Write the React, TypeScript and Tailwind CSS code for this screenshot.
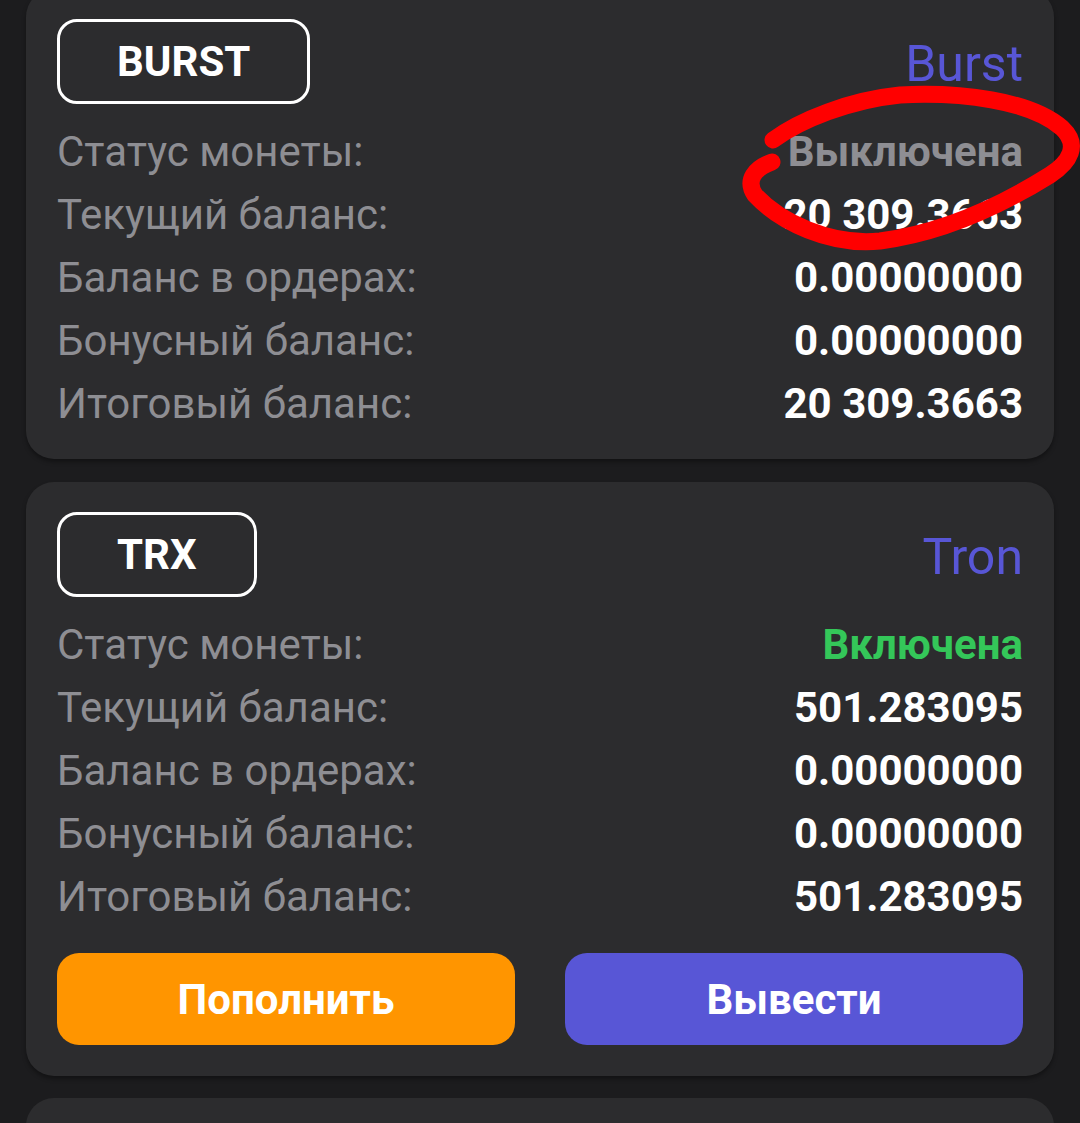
import React from 'react'

type Row = { label: string; value: string; tone?: 'on' | 'off' }

const coins = [
  {
    ticker: 'BURST',
    name: 'Burst',
    rows: [
      { label: 'Статус монеты:', value: 'Выключена', tone: 'off' },
      { label: 'Текущий баланс:', value: '20 309.3663' },
      { label: 'Баланс в ордерах:', value: '0.00000000' },
      { label: 'Бонусный баланс:', value: '0.00000000' },
      { label: 'Итоговый баланс:', value: '20 309.3663' },
    ] as Row[],
    actions: false,
  },
  {
    ticker: 'TRX',
    name: 'Tron',
    rows: [
      { label: 'Статус монеты:', value: 'Включена', tone: 'on' },
      { label: 'Текущий баланс:', value: '501.283095' },
      { label: 'Баланс в ордерах:', value: '0.00000000' },
      { label: 'Бонусный баланс:', value: '0.00000000' },
      { label: 'Итоговый баланс:', value: '501.283095' },
    ] as Row[],
    actions: true,
  },
]

const CoinCard = ({ coin, first }: { coin: (typeof coins)[number]; first?: boolean }) => {
  return (
    <div
      className={`bg-[#2c2c2e] rounded-[28px] px-[31px] pt-[30px] shadow-[0_3px_4px_rgba(0,0,0,0.35)] ${
        first ? 'mt-[-11px] pb-[24px]' : 'mt-[23px] pb-[31px]'
      }`}
    >
      {/* Header */}
      <div className="flex justify-between items-center">
        <div className="h-[85px] px-[57px] border-[3px] border-white rounded-[20px] flex items-center text-white font-bold text-[42px] leading-none">
          {coin.ticker}
        </div>
        <span className="text-[#5856d6] text-[50px] leading-none pt-[4px]">{coin.name}</span>
      </div>

      {/* Balances */}
      <div className="mt-[16px] flex flex-col">
        {coin.rows.map((row) => (
          <div key={row.label} className="h-[63px] flex items-center justify-between text-[42px] leading-none">
            <span className="text-[#8e8e93]">{row.label}</span>
            <span
              className={`font-bold ${
                row.tone === 'on' ? 'text-[#34c759]' : row.tone === 'off' ? 'text-[#8e8e93]' : 'text-white'
              }`}
            >
              {row.value}
            </span>
          </div>
        ))}
      </div>

      {/* Buttons */}
      {coin.actions && (
        <div className="mt-[25px] grid grid-cols-2 gap-[50px]">
          <button className="h-[92px] rounded-[22px] bg-[#ff9500] text-white font-bold text-[42px]">Пополнить</button>
          <button className="h-[92px] rounded-[22px] bg-[#5856d6] text-white font-bold text-[42px]">Вывести</button>
        </div>
      )}
    </div>
  )
}

export default function App() {
  return (
    <section
      className="relative w-full h-[1123px] overflow-hidden bg-[#1c1c1e] px-[26px]"
      style={{ fontFamily: 'Roboto, "Noto Sans", sans-serif' }}
    >
      <CoinCard coin={coins[0]} first />
      <CoinCard coin={coins[1]} />
      <div className="mt-[22px] h-[200px] bg-[#2c2c2e] rounded-[28px]" />

      {/* hand-drawn mark */}
      <svg className="absolute inset-0 pointer-events-none" width="1080" height="1123" viewBox="0 0 1080 1123">
        <path
          d="M773 140 C 800 120, 850 100, 900 95 C 960 92, 1030 100, 1062 128 C 1080 145, 1070 162, 1050 175 C 1010 200, 950 232, 880 241 C 830 246, 780 222, 755 195 C 745 180, 755 168, 772 162"
          fill="none"
          stroke="#ff0000"
          strokeWidth="17"
          strokeLinecap="round"
          strokeLinejoin="round"
        />
      </svg>
    </section>
  )
}
